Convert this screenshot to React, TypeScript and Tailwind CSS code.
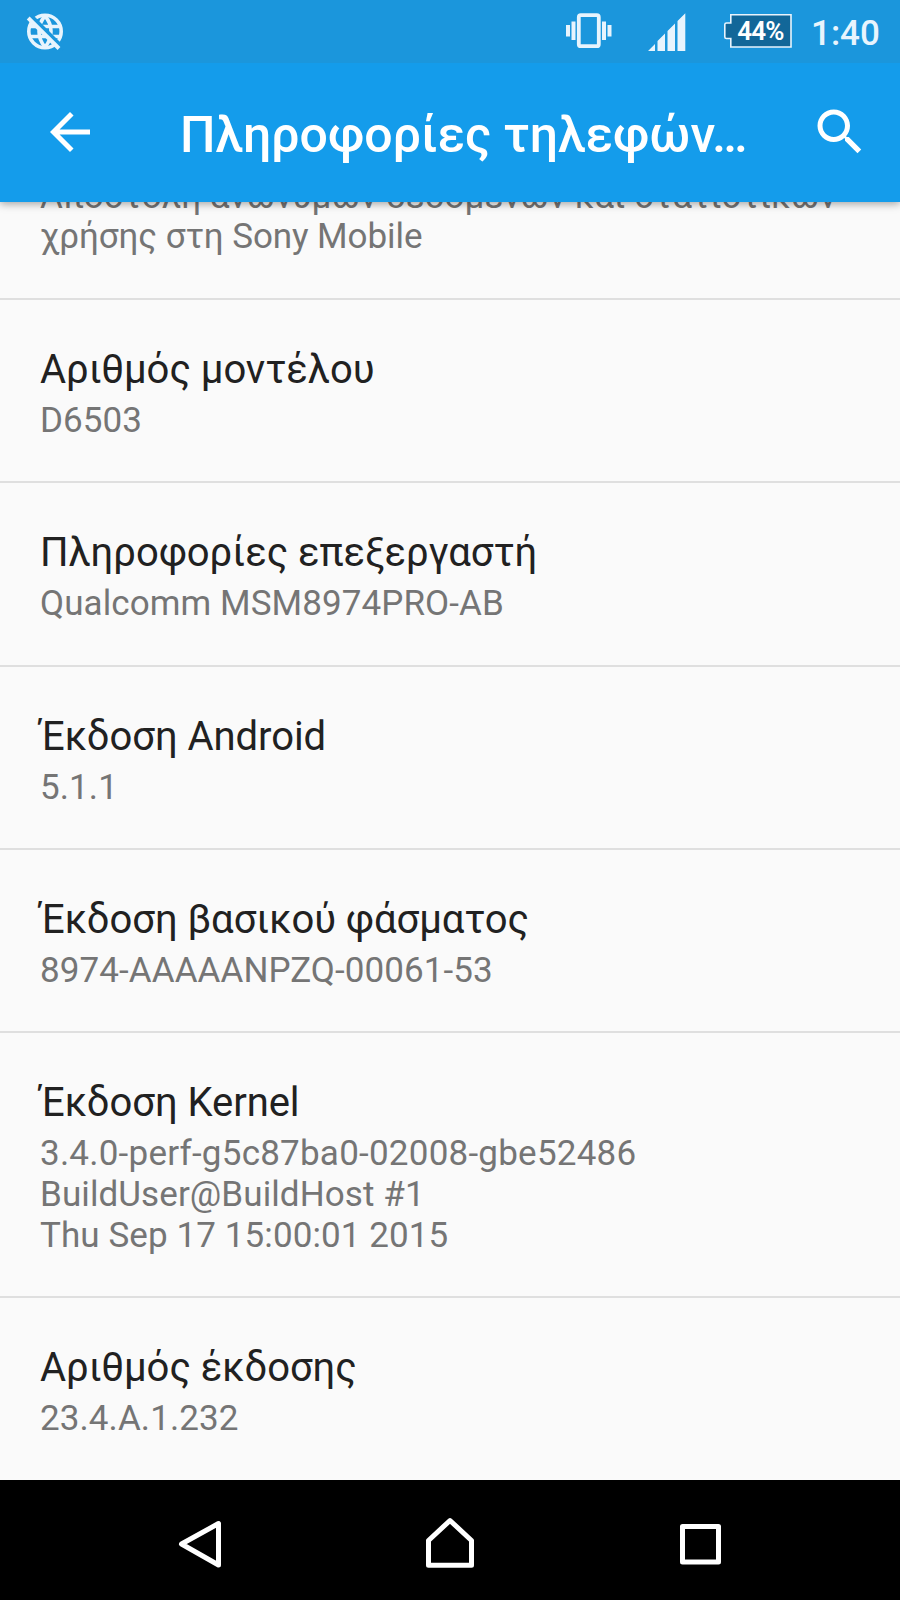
import type { ReactNode } from 'react';

interface InfoItem {
  title: string;
  lines: string[];
}

const items: InfoItem[] = [
  { title: 'Αριθμός μοντέλου', lines: ['D6503'] },
  { title: 'Πληροφορίες επεξεργαστή', lines: ['Qualcomm MSM8974PRO-AB'] },
  { title: 'Έκδοση Android', lines: ['5.1.1'] },
  { title: 'Έκδοση βασικού φάσματος', lines: ['8974-AAAAANPZQ-00061-53'] },
  {
    title: 'Έκδοση Kernel',
    lines: ['3.4.0-perf-g5c87ba0-02008-gbe52486', 'BuildUser@BuildHost #1', 'Thu Sep 17 15:00:01 2015'],
  },
  { title: 'Αριθμός έκδοσης', lines: ['23.4.A.1.232'] },
];

function GlobeOffIcon() {
  return (
    <svg width="38" height="38" viewBox="0 0 38 38" fill="none" stroke="#e8f4fd" strokeWidth="3.6">
      <circle cx="19" cy="18.500" r="16.200" />
      <path d="M4 13.500h30M4 23.500h30" />
      <path d="M19 3c-8 9-8 22 0 31M19 3c8 9 8 22 0 31" />
      <path d="M0 -2.200L38 35.800" stroke="#1b96dc" strokeWidth="4" />
      <path d="M2.200 5L33 35.500" strokeWidth="4" />
    </svg>
  );
}

function VibrateIcon() {
  return (
    <svg width="46" height="36" viewBox="0 0 46 36" fill="#e8f4fd">
      <rect x="12.800" y="2.200" width="20" height="31" rx="2" fill="none" stroke="#e8f4fd" strokeWidth="3.800" />
      <path d="M0 12h4v11.500H0zM5.500 8.500h4v18.500h-4zM36 8.500h4v18.500h-4zM41.500 12h4v11.500h-4z" />
    </svg>
  );
}

function SignalIcon() {
  return (
    <svg width="38" height="38" viewBox="0 0 38 38" fill="#e8f4fd">
      <path d="M0 38L7 31V38zM9.500 28L17 20.500V38H9.500zM19.500 18L27 10.500V38H19.500zM29.500 8L37.300 0.300V38H29.500z" />
    </svg>
  );
}

function Battery({ level }: { level: number }) {
  return (
    <div className="relative flex h-[34px] w-[68px] items-center justify-center pl-[5px]">
      <svg className="absolute inset-0" width="68" height="34" viewBox="0 0 68 34">
        <path
          d="M6.800 .8H67V33H6.800V24.500H2.500Q.8 24.500 .8 23V10.500Q.8 9 2.500 9H6.800z"
          fill="#126799"
          stroke="#e8f4fd"
          strokeWidth="1.600"
        />
      </svg>
      <span className="relative text-[26px] leading-[34px] font-semibold tracking-[-0.8px] text-white">{level}%</span>
    </div>
  );
}

function StatusBar() {
  return (
    <div className="flex h-[62.5px] items-start bg-[#1b96dc] pt-[13px] pr-[20px] pl-[26px]">
      <GlobeOffIcon />
      <div className="ml-auto flex items-start">
        <VibrateIcon />
        <div className="ml-[36px]">
          <SignalIcon />
        </div>
        <div className="mt-px ml-[38px]">
          <Battery level={44} />
        </div>
        <span className="mt-px ml-[19px] w-[69px] text-[35px] leading-[40px] font-medium whitespace-nowrap text-[#e8f4fd]">
          1:40
        </span>
      </div>
    </div>
  );
}

function Toolbar() {
  return (
    <div className="flex h-[139.5px] items-center bg-[#149ceb] pr-[30px] pl-[40px] text-white">
      <svg width="60" height="60" viewBox="0 0 24 24" fill="currentColor">
        <path d="M20 11H7.830l5.590-5.590L12 4l-8 8 8 8 1.410-1.410L7.830 13H20v-2z" />
      </svg>
      <h1 className="mt-[5px] ml-[80px] flex-1 text-[50px] leading-[60px] font-medium whitespace-nowrap">
        Πληροφορίες τηλεφών…
      </h1>
      <svg width="60" height="60" viewBox="0 0 24 24" fill="currentColor">
        <path d="M15.500 14h-.79l-.28-.27C15.410 12.590 16 11.110 16 9.500 16 5.910 13.090 3 9.500 3S3 5.910 3 9.500 5.910 16 9.500 16c1.610 0 3.090-.59 4.230-1.570l.27.28v.79l5 4.990L20.490 19l-4.990-5zm-6 0C7.010 14 5 11.990 5 9.500S7.010 5 9.500 5 14 7.010 14 9.500 11.990 14 9.500 14z" />
      </svg>
    </div>
  );
}

function Summary({ children, className = '' }: { children: ReactNode; className?: string }) {
  return (
    <p className={`text-[35px] leading-[40.83px] whitespace-nowrap text-[#757575] ${className}`}>{children}</p>
  );
}

function InfoRow({ title, lines }: InfoItem) {
  return (
    <li className="border-t-2 border-[#dfdfdf] px-[40px] pt-[46px] pb-[39.5px]">
      <h2 className="mb-[8px] text-[40px] leading-[47px] tracking-[-0.04px] whitespace-nowrap text-[#212121]">
        {title}
      </h2>
      {lines.map((line) => (
        <Summary key={line} className={line.length > 30 ? 'tracking-[0.23px]' : 'tracking-[0.09px]'}>
          {line}
        </Summary>
      ))}
    </li>
  );
}

function NavBar() {
  return (
    <nav className="flex h-[120px] items-center justify-between bg-black px-[170px]">
      <svg width="60" height="60" viewBox="0 0 60 60" fill="none" stroke="white" strokeWidth="5" strokeLinejoin="round">
        <path d="M11.500 34L48.500 13.500V55z" />
      </svg>
      <svg width="60" height="60" viewBox="0 0 60 60" fill="none" stroke="white" strokeWidth="5" strokeLinejoin="round">
        <path d="M8.500 30.500L30 10.500L51.500 30.500V55.300H8.500z" />
      </svg>
      <svg width="60" height="60" viewBox="0 0 60 60" fill="none" stroke="white" strokeWidth="5" strokeLinejoin="round">
        <path d="M12.500 16.500h36v35.500h-36z" />
      </svg>
    </nav>
  );
}

export default function App() {
  return (
    <div className="flex h-[1600px] w-[900px] flex-col overflow-hidden bg-[#fafafa] font-[Roboto,sans-serif]">
      <header className="relative z-10 shadow-[0_2px_8px_rgba(0,0,0,0.35)]">
        <StatusBar />
        <Toolbar />
      </header>
      <main className="flex-1 overflow-hidden">
        <div className="-mt-[25.5px] h-[121.500px] px-[40px]">
          <Summary className="tracking-[0.04px]">Αποστολή ανώνυμων δεδομένων και στατιστικών</Summary>
          <Summary className="tracking-[-0.08px]">χρήσης στη Sony Mobile</Summary>
        </div>
        <ul>
          {items.map((item) => (
            <InfoRow key={item.title} {...item} />
          ))}
        </ul>
      </main>
      <NavBar />
    </div>
  );
}
